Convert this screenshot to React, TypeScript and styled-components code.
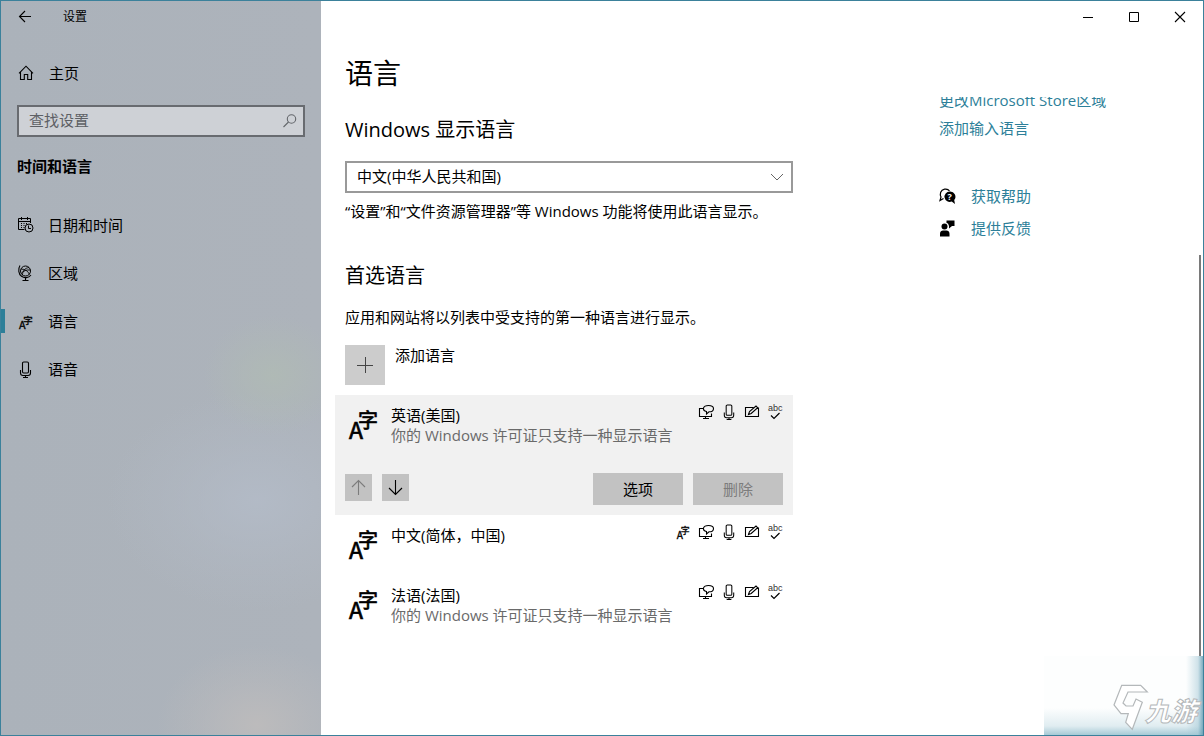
import React from 'react';
import styled, { createGlobalStyle } from 'styled-components';

const accent = '#2d7f99';
const fonts = '"Open Sans", "Noto Sans CJK SC", sans-serif';

const GlobalStyle = createGlobalStyle`
  *, *::before, *::after { box-sizing: border-box; }
  body { margin: 0; background: #fff; }
  body, button, input, select { font-family: ${fonts}; font-size: 15px; line-height: 20px; color: #000; }
  h1, h2, h3, p, ul { margin: 0; padding: 0; font-weight: 400; }
  ul { list-style: none; }
  svg { display: block; flex: none; overflow: visible; }
`;

/* Window frame */
const Window = styled.div`
  position: relative;
  display: flex;
  min-height: 100vh;
  border: 1px solid #3b819b;
  overflow: hidden;
`;

const Sidebar = styled.aside`
  flex: 0 0 320px;
  background:
    radial-gradient(ellipse 70px 60px at 272px 374px, rgba(176, 187, 180, 0.8), rgba(176, 187, 180, 0.4) 50%, rgba(176, 187, 180, 0)),
    radial-gradient(ellipse 150px 110px at 256px 500px, rgba(179, 187, 199, 0.9), rgba(179, 187, 199, 0.35) 55%, rgba(179, 187, 199, 0)),
    radial-gradient(ellipse 100px 80px at 256px 724px, rgba(188, 187, 188, 1), rgba(188, 187, 188, 0.4) 55%, rgba(188, 187, 188, 0)),
    linear-gradient(90deg, #abb2ba, #adb3bb);
`;

const SideTitle = styled.div`
  display: flex;
  align-items: center;
  height: 32px;
  padding-left: 16px;
  gap: 30px;
  font-size: 12px;
`;

const IconButton = styled.button`
  display: flex;
  padding: 0;
  border: 0;
  background: none;
`;

const NavLink = styled.a<{ $active?: boolean }>`
  display: flex;
  align-items: center;
  gap: 14px;
  height: 48px;
  padding-left: 16px;
  color: #000;
  text-decoration: none;
  background: linear-gradient(${accent}, ${accent}) no-repeat left center /
    ${(p) => (p.$active ? '4px 24px' : '0 0')};
`;

const HomeNav = styled.nav`
  padding: 16px 0 8px;
`;

const SearchBox = styled.label`
  display: flex;
  align-items: center;
  height: 32px;
  margin: 0 16px;
  padding: 0 5px 0 10px;
  border: 2px solid #686b70;
  background: #ced1d6;
  color: #63666b;
`;

const SearchInput = styled.input`
  flex: 1;
  min-width: 0;
  height: 28px;
  padding: 0 0 2px;
  border: 0;
  outline: 0;
  background: none;
  &::placeholder { color: #5d6065; opacity: 1; }
`;

const SideHeading = styled.h2`
  margin: 19px 16px 25px;
  font-size: 15px;
  font-weight: 700;
`;

/* Main area */
const Main = styled.main`
  flex: 1;
  min-width: 0;
  display: flex;
  flex-direction: column;
  background: #fff;
`;

const Caption = styled.div`
  display: flex;
  justify-content: flex-end;
  height: 32px;
`;

const CaptionButton = styled(IconButton)`
  width: 46px;
  align-items: center;
  justify-content: center;
`;

const PageTitle = styled.h1`
  height: 64px;
  padding: 20px 24px 0;
  font-size: 28px;
  line-height: 40px;
`;

const Body = styled.div`
  flex: 1;
  display: flex;
  gap: 146px;
  padding-left: 14px;
  overflow: hidden;
`;

const Content = styled.div`
  flex: 0 1 458px;
  min-width: 0;
`;

const Section = styled.section`
  padding: 19px 0 0 10px;
  & + & { padding-top: 41px; }
`;

const SectionTitle = styled.h2`
  font-size: 20px;
  line-height: 28px;
`;

const SelectWrap = styled.div`
  position: relative;
  margin: 17px 0 8px;
`;

const Select = styled.select`
  display: block;
  width: 100%;
  height: 32px;
  padding: 0 32px 2px 10px;
  border: 2px solid #999;
  border-radius: 0;
  background: #fff;
  appearance: none;
`;

const Chevron = styled.svg`
  position: absolute;
  right: 10px;
  top: 12px;
  pointer-events: none;
`;

const Note = styled.p`
  margin: 17px 0 18px;
`;

const AddButton = styled.button`
  display: flex;
  gap: 10px;
  padding: 0;
  border: 0;
  background: none;
  text-align: left;
`;

const AddTile = styled.span`
  display: grid;
  place-items: center;
  width: 40px;
  height: 40px;
  background: #ccc;
`;

const LanguageList = styled.ul`
  margin-top: 10px;
`;

const LanguageItem = styled.li<{ $selected?: boolean }>`
  display: flex;
  flex-direction: column;
  justify-content: space-between;
  min-height: ${(p) => (p.$selected ? 120 : 60)}px;
  padding: 10px;
  background: ${(p) => (p.$selected ? '#f1f1f1' : 'transparent')};
`;

const LanguageRow = styled.div`
  display: flex;
`;

const LanguageText = styled.div`
  flex: 1;
  padding-left: 10px;
`;

const LanguageName = styled.h3`
  font-size: 15px;
`;

const Muted = styled.p`
  color: #6a6a6a;
`;

const Features = styled.div`
  display: flex;
  gap: 7px;
  width: 0;
  margin-top: -1px;
  justify-content: flex-end;
`;

const Actions = styled.div`
  display: flex;
  align-items: flex-start;
  gap: 10px;
`;

const MoveButton = styled.button`
  display: grid;
  place-items: center;
  width: 27px;
  height: 27px;
  margin-top: 1px;
  padding: 0;
  border: 0;
  background: #c2c2c2;
  color: #000;
  &:disabled { color: #7c7c7c; }
`;

const ActionButton = styled.button`
  width: 90px;
  height: 32px;
  padding: 0;
  border: 0;
  background: #c2c2c2;
  &:disabled { color: #7c7c7c; }
`;

const Spacer = styled.span`
  flex: 1;
`;

/* Related links, scrolled partly under the page title */
const Related = styled.div`
  flex: 1;
  display: flex;
  flex-direction: column;
  align-items: flex-start;
  gap: 8px;
  margin-top: -7px;
`;

const Link = styled.a`
  color: ${accent};
  text-decoration: none;
  white-space: nowrap;
`;

const HelpLinks = styled.ul`
  display: grid;
  gap: 12px;
  margin-top: 40px;
`;

const HelpItem = styled.li`
  display: flex;
  align-items: center;
  gap: 15px;
`;

const ScrollThumb = styled.div`
  position: absolute;
  right: 2px;
  top: 254px;
  bottom: 40px;
  width: 2px;
  background: #7a7a7a;
`;

const Watermark = styled.div`
  position: absolute;
  right: -1px;
  bottom: -1px;
  width: 160px;
  height: 80px;
  background:
    linear-gradient(270deg, rgba(84, 148, 172, 0.85) 0, rgba(160, 198, 212, 0.5) 6px, rgba(255, 255, 255, 0) 18px),
    linear-gradient(0deg, rgba(150, 192, 206, 0.9) 0, rgba(205, 225, 232, 0.6) 10px, rgba(255, 255, 255, 0) 28px),
    #fdfefe;
`;

/* Icons */
const line = { fill: 'none', stroke: 'currentColor', strokeWidth: 1 } as const;

const ArrowLeft = () => (
  <svg width="16" height="16" viewBox="0 0 16 16" {...line} strokeWidth={1.1}>
    <path d="M14 7.500H2.500M8 2 2.500 7.500 8 13" />
  </svg>
);

const HomeIcon = () => (
  <svg width="18" height="18" viewBox="0 0 18 18" {...line} strokeWidth={1.1}>
    <path d="M2 9.300 9 2.200l7 7.100M3.500 8v7.500h3.800v-5h3.400v5h3.800V8" />
  </svg>
);

const SearchIcon = () => (
  <svg width="16" height="16" viewBox="0 0 16 16" {...line} strokeWidth={1.1}>
    <circle cx="9.500" cy="6" r="4.200" />
    <path d="M6.500 9 1.500 14" />
  </svg>
);

const CalendarIcon = () => (
  <svg width="17" height="18" viewBox="0 0 17 18" {...line}>
    <path d="M7.500 13.500h-6v-11h12v4.500M1.500 5.500h12M4.500 1v3M10.500 1v3" />
    <path d="M4 7.500h1M6.500 7.500h1M9 7.500h1M4 9.500h1M6.500 9.500h1M4 11.500h1M6.500 11.500h1" />
    <circle cx="12" cy="12" r="4" />
    <path d="M11.500 9.500v3h2.500" />
  </svg>
);

const GlobeIcon = () => (
  <svg width="17" height="18" viewBox="0 0 17 18" {...line}>
    <circle cx="8.500" cy="7" r="5" />
    <path d="M4 5c4 0 7.500 2.500 8.500 5.500M5.500 11c0-4 2.500-7 6.500-7.500M4.500 9c2-2 5-3.500 9-3" strokeWidth={0.9} />
    <path d="M3 1.500C.8 5 1.500 10 4.500 12.300c3 2.200 7 1.700 9.500-1.300M8.500 13.500V16M5.500 16.500h6" strokeWidth={1.1} />
  </svg>
);

const MicIcon = ({ size = 17 }: { size?: number }) => (
  <svg width={size} height={size} viewBox="0 0 17 17" {...line} strokeWidth={1.1}>
    <rect x="5.500" y="1" width="6" height="11" rx="1.200" />
    <path d="M3.500 9v3c0 1.500 1 2.500 2.500 2.500h5c1.500 0 2.500-1 2.500-2.500V9M8.500 14.500v2M6 16.500h5" />
  </svg>
);

const LanguageIcon = ({ size }: { size: number }) => (
  <svg width={size} height={size} viewBox="0 0 36 36" fill="currentColor" stroke="currentColor" strokeWidth="0.700">
    <text x="4" y="34" fontFamily="Noto Sans CJK SC" fontSize="23" fontWeight="400">A</text>
    <text x="13" y="23" fontFamily="Noto Sans CJK SC" fontSize="20" fontWeight="400">字</text>
  </svg>
);

const DisplayIcon = () => (
  <svg width="16" height="16" viewBox="0 0 16 16" {...line} strokeWidth={1.1}>
    <path d="M5 4.500H1.500v8h12V9.500M5 14.500h6M7.500 12.500v2" />
    <path d="M8.500 10V7.500C5.500 6.800 5.200 5.500 5.500 4 6 2.300 8 1.500 10.500 1.500c3 0 5 1.300 5 3.200s-2 3.100-4.500 3.100z" />
  </svg>
);

const PenIcon = () => (
  <svg width="16" height="16" viewBox="0 0 16 16" {...line} strokeWidth={1.1}>
    <path d="M9.500 3.500h-8v9h13v-9M4.500 10.500l1-3 6.500-5.500 1.700 1.700L7.200 9.500z" />
  </svg>
);

const SpellIcon = () => (
  <svg width="16" height="16" viewBox="0 0 16 16">
    <text x="1" y="7" fontFamily="Liberation Sans" fontSize="9" fill="#333">abc</text>
    <path d="m4 11.500 3 3 5.500-5.500" {...line} strokeWidth={1.2} />
  </svg>
);

const MoveArrow = ({ down }: { down?: boolean }) => (
  <svg width="17" height="17" viewBox="0 0 17 17" {...line} strokeWidth={1.1}>
    <path d={down ? 'M8.500 1v14.500M2 9l6.500 6.500L15 9' : 'M8.500 16V1.500M2 8l6.500-6.500L15 8'} />
  </svg>
);

const HelpIcon = () => (
  <svg width="17" height="17" viewBox="0 0 17 17">
    <path d="M4.500 10.500 1 12.500l1-3.500C.5 6 1.500 2 5.500 1.200c2-.4 4 .300 5 1.800" fill="none" stroke="#000" strokeWidth="1.200" />
    <path d="M10.700 3.500a5.200 5.200 0 1 0 2 10L16 16l-.800-4A5.200 5.200 0 0 0 10.700 3.500z" />
    <text x="8.500" y="12" fontFamily="Open Sans" fontSize="9" fontWeight="700" fill="#fff">?</text>
  </svg>
);

const FeedbackIcon = () => (
  <svg width="17" height="17" viewBox="0 0 17 17">
    <circle cx="5.500" cy="6.500" r="3" />
    <path d="M1 16.500v-2.700C1 11.500 2.500 10.500 4 10.500h3.500c1.500 0 3 1 3 3.300v2.700zM7.500 .500h8V6H13l-3 2.500V6L9 3.500 7.500 3z" />
  </svg>
);

const navItems = [
  { label: '日期和时间', icon: <CalendarIcon /> },
  { label: '区域', icon: <GlobeIcon /> },
  { label: '语言', icon: <LanguageIcon size={17} />, active: true },
  { label: '语音', icon: <MicIcon /> },
];

const licenseNote = '你的 Windows 许可证只支持一种显示语言';

const languages = [
  { name: '英语(美国)', note: licenseNote, selected: true },
  { name: '中文(简体，中国)', display: true },
  { name: '法语(法国)', note: licenseNote },
];

export default function App() {
  return (
    <>
      <GlobalStyle />
      <Window>
        <Sidebar>
          <SideTitle>
            <IconButton aria-label="返回"><ArrowLeft /></IconButton>
            <span>设置</span>
          </SideTitle>
          <HomeNav>
            <NavLink href="#home"><HomeIcon />主页</NavLink>
          </HomeNav>
          <SearchBox>
            <SearchInput type="text" placeholder="查找设置" aria-label="查找设置" />
            <SearchIcon />
          </SearchBox>
          <SideHeading>时间和语言</SideHeading>
          <nav>
            {navItems.map((n) => (
              <NavLink key={n.label} href="#nav" $active={n.active}>
                {n.icon}
                {n.label}
              </NavLink>
            ))}
          </nav>
        </Sidebar>

        <Main>
          <Caption>
            <CaptionButton aria-label="最小化">
              <svg width="12" height="12" viewBox="0 0 12 12" {...line}><path d="M1 6.500h10" /></svg>
            </CaptionButton>
            <CaptionButton aria-label="最大化">
              <svg width="12" height="12" viewBox="0 0 12 12" {...line}><path d="M1.500 1.500h9v9h-9z" /></svg>
            </CaptionButton>
            <CaptionButton aria-label="关闭">
              <svg width="12" height="12" viewBox="0 0 12 12" {...line} strokeWidth={1.1}><path d="m1 1 10 10M11 1 1 11" /></svg>
            </CaptionButton>
          </Caption>
          <PageTitle>语言</PageTitle>
          <Body>
            <Content>
              <Section>
                <SectionTitle id="display-language">Windows 显示语言</SectionTitle>
                <SelectWrap>
                  <Select aria-labelledby="display-language">
                    <option>中文(中华人民共和国)</option>
                  </Select>
                  <Chevron width="12" height="8" viewBox="0 0 12 8" fill="none" stroke="#666">
                    <path d="m0 1 6 6 6-6" />
                  </Chevron>
                </SelectWrap>
                <p>“设置”和“文件资源管理器”等 Windows 功能将使用此语言显示。</p>
              </Section>
              <Section>
                <SectionTitle>首选语言</SectionTitle>
                <Note>应用和网站将以列表中受支持的第一种语言进行显示。</Note>
                <AddButton>
                  <AddTile>
                    <svg width="18" height="18" viewBox="0 0 18 18" stroke="#444"><path d="M1 9.500h16M9.500 1v16" /></svg>
                  </AddTile>
                  添加语言
                </AddButton>
              </Section>
              <LanguageList>
                {languages.map((l) => (
                  <LanguageItem key={l.name} $selected={l.selected}>
                    <LanguageRow>
                      <LanguageIcon size={36} />
                      <LanguageText>
                        <LanguageName>{l.name}</LanguageName>
                        {l.note && <Muted>{l.note}</Muted>}
                      </LanguageText>
                      <Features>
                        {l.display && <LanguageIcon size={16} />}
                        <DisplayIcon />
                        <MicIcon size={16} />
                        <PenIcon />
                        <SpellIcon />
                      </Features>
                    </LanguageRow>
                    {l.selected && (
                      <Actions>
                        <MoveButton aria-label="上移" disabled><MoveArrow /></MoveButton>
                        <MoveButton aria-label="下移"><MoveArrow down /></MoveButton>
                        <Spacer />
                        <ActionButton>选项</ActionButton>
                        <ActionButton disabled>删除</ActionButton>
                      </Actions>
                    )}
                  </LanguageItem>
                ))}
              </LanguageList>
            </Content>
            <Related>
              <Link href="#store-region">更改Microsoft Store区域</Link>
              <Link href="#input-language">添加输入语言</Link>
              <HelpLinks>
                <HelpItem><HelpIcon /><Link href="#help">获取帮助</Link></HelpItem>
                <HelpItem><FeedbackIcon /><Link href="#feedback">提供反馈</Link></HelpItem>
              </HelpLinks>
            </Related>
          </Body>
        </Main>
        <ScrollThumb />
        <Watermark>
          <svg width="160" height="80" viewBox="0 0 160 80" fill="#fff" stroke="#b4b8ba" strokeWidth="1.200">
            <path d="M77.700 29.300h19l6.600 6.700H84l-5 11 3 3h7l3-7 6.300 3.300-10 27-6.600-7 2.600-8.600H77L70 49z" />
            <text x="101" y="65" fontFamily="Noto Sans CJK SC" fontSize="26" fontWeight="900" fontStyle="italic" strokeWidth="1">九游</text>
          </svg>
        </Watermark>
      </Window>
    </>
  );
}
